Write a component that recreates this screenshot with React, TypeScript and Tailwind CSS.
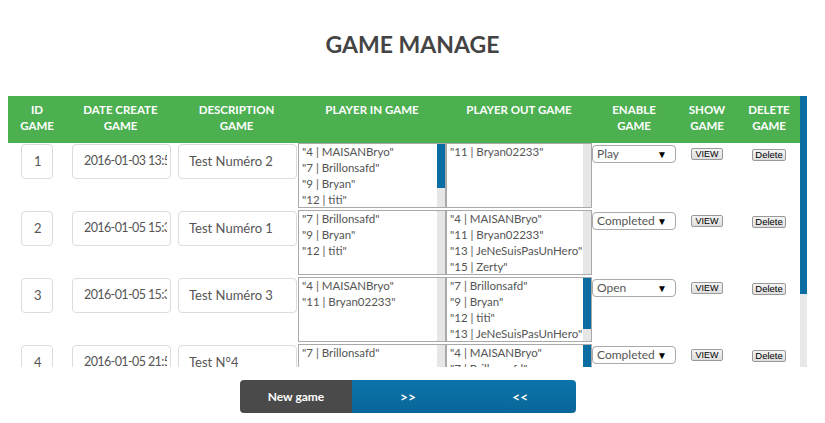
import React from "react";

type Row = {
  id: number;
  date: string;
  desc: string;
  playersIn: string[];
  inThumb: number;
  playersOut: string[];
  outThumb: number;
  status: string;
};

const rows: Row[] = [
  {
    id: 1,
    date: "2016-01-03 13:52:11",
    desc: "Test Numéro 2",
    playersIn: ["4 | MAISANBryo", "7 | Brillonsafd", "9 | Bryan", "12 | titi", "13 | JeNeSuisPasUnHero"],
    inThumb: 44,
    playersOut: ["11 | Bryan02233"],
    outThumb: 0,
    status: "Play",
  },
  {
    id: 2,
    date: "2016-01-05 15:31:40",
    desc: "Test Numéro 1",
    playersIn: ["7 | Brillonsafd", "9 | Bryan", "12 | titi"],
    inThumb: 0,
    playersOut: ["4 | MAISANBryo", "11 | Bryan02233", "13 | JeNeSuisPasUnHero", "15 | Zerty"],
    outThumb: 0,
    status: "Completed",
  },
  {
    id: 3,
    date: "2016-01-05 15:38:02",
    desc: "Test Numéro 3",
    playersIn: ["4 | MAISANBryo", "11 | Bryan02233"],
    inThumb: 0,
    playersOut: ["7 | Brillonsafd", "9 | Bryan", "12 | titi", "13 | JeNeSuisPasUnHero", "15 | Zerty"],
    outThumb: 51,
    status: "Open",
  },
  {
    id: 4,
    date: "2016-01-05 21:54:19",
    desc: "Test N°4",
    playersIn: ["7 | Brillonsafd"],
    inThumb: 0,
    playersOut: ["4 | MAISANBryo", "7 | Brillonsafd", "9 | Bryan", "12 | titi", "13 | JeNeSuisPasUnHero"],
    outThumb: 44,
    status: "Completed",
  },
];

const cols = "grid grid-cols-[58px_109px_123px_148px_146px_84px_62px_62px]";

function ListBox({ items, thumb }: { items: string[]; thumb: number }) {
  return (
    <div className="flex h-[65px] border border-[#a9a9a9] bg-white">
      <div className="flex-1 overflow-hidden whitespace-nowrap pl-[3px] text-[11.5px] leading-[16px] text-[#555]">
        {items.map((p) => (
          <div key={p}>"{p}"</div>
        ))}
      </div>
      <div className="flex w-2 flex-col bg-[#e6e6e6]">
        {thumb > 0 && <div className="bg-[#0b6ea3]" style={{ height: thumb }} />}
      </div>
    </div>
  );
}

function Field({ value, className }: { value: string | number; className: string }) {
  return (
    <div
      className={`flex h-[35px] items-center rounded border border-[#dcdcdc] bg-white text-[#555] ${className}`}
    >
      <div className="overflow-hidden whitespace-nowrap">{value}</div>
    </div>
  );
}

export default function App() {
  return (
    <div className="min-h-screen bg-white font-['Lato','Open_Sans',sans-serif]">
      {/* Title */}
      <div className="h-[96px] pt-[29px] text-center">
        <h1 className="text-[23px] font-bold leading-[30px] text-[#444]">GAME MANAGE</h1>
      </div>

      {/* Scrolling table */}
      <div className="ml-2 flex h-[271px] w-[799px]">
        <div className="w-[792px] overflow-hidden">
          <div className={`${cols} h-[47px] bg-[#4caf50] pt-[6px] text-center text-[11.5px] font-bold uppercase leading-4 text-white`}>
            <div>ID<br />GAME</div>
            <div>DATE CREATE<br />GAME</div>
            <div>DESCRIPTION<br />GAME</div>
            <div>PLAYER IN GAME</div>
            <div>PLAYER OUT GAME</div>
            <div>ENABLE<br />GAME</div>
            <div>SHOW<br />GAME</div>
            <div>DELETE<br />GAME</div>
          </div>

          {rows.map((r) => (
            <div key={r.id} className={`${cols} h-[67px]`}>
              <div className="flex justify-center pt-px">
                <Field value={r.id} className="w-8 pl-3 text-[13px]" />
              </div>
              <div className="pl-[6px] pt-px">
                <Field value={r.date} className="w-[99px] pl-[11px] pr-[3px] text-[12.5px] tracking-[-0.6px]" />
              </div>
              <div className="pl-[3px] pt-px">
                <Field value={r.desc} className="w-[119px] pl-[10px] text-[13px]" />
              </div>
              <ListBox items={r.playersIn} thumb={r.inThumb} />
              <ListBox items={r.playersOut} thumb={r.outThumb} />
              <div className="pt-[2px]">
                <div className="flex h-[18px] w-[84px] items-center justify-between rounded-sm border border-[#a9a9a9] bg-white pl-1 pr-[8px] text-[12px] text-[#555]">
                  <span>{r.status}</span>
                  <span className="text-[10px] text-black">▼</span>
                </div>
              </div>
              <div className="flex justify-center pt-[5px]">
                <button className="h-[12px] w-8 rounded-[2px] border border-[#999] bg-gradient-to-b from-[#f4f4f4] to-[#dedede] font-['Liberation_Sans',sans-serif] text-[9px] leading-[10px] text-black">
                  VIEW
                </button>
              </div>
              <div className="flex justify-center pt-[6px]">
                <button className="h-[12px] w-[34px] rounded-[2px] border border-[#999] bg-gradient-to-b from-[#f4f4f4] to-[#dedede] font-['Liberation_Sans',sans-serif] text-[9.5px] leading-[10px] text-black">
                  Delete
                </button>
              </div>
            </div>
          ))}
        </div>
        <div className="flex w-[7px] flex-col bg-[#e8e8e8]">
          <div className="h-[198px] bg-[#0b6ea3]" />
        </div>
      </div>

      {/* Actions */}
      <div className="mt-[13px] flex justify-center pr-[9px]">
        <button className="h-[33px] w-[112px] rounded-l bg-[#4a4a4a] text-[12px] font-bold text-white">New game</button>
        <button className="h-[33px] w-[112px] bg-gradient-to-b from-[#0b74ab] to-[#0a6699] text-[14px] font-bold text-white">
          &gt;&gt;
        </button>
        <button className="h-[33px] w-[112px] rounded-r bg-gradient-to-b from-[#0b74ab] to-[#0a6699] text-[14px] font-bold text-white">
          &lt;&lt;
        </button>
      </div>
    </div>
  );
}
